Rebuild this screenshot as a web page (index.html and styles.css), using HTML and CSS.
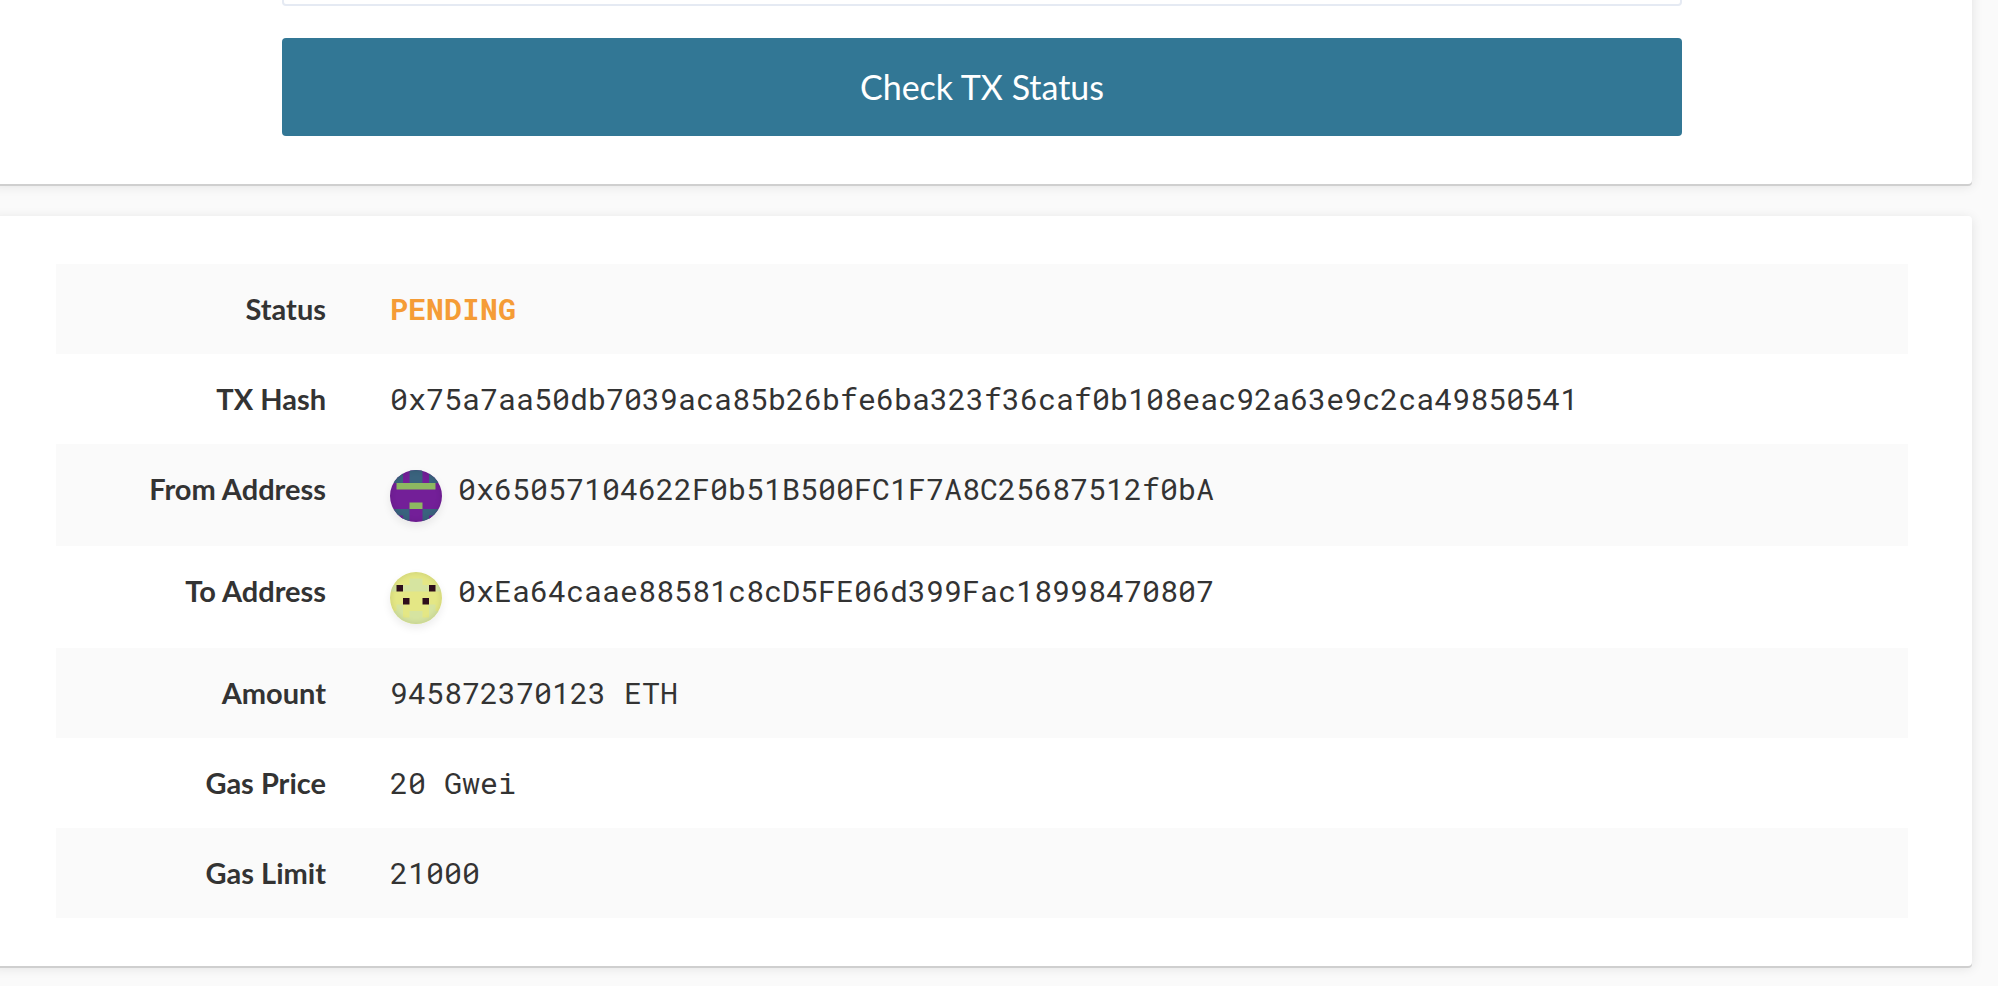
FILE: index.html
```html
<!DOCTYPE html>
<html lang="en">
<head>
<meta charset="utf-8">
<title>Check TX Status</title>
<link rel="stylesheet" href="styles.css">
</head>
<body>
<main class="page">
  <section class="card card-form">
    <form class="form">
      <input class="hash-input" type="text" aria-label="TX Hash">
      <button class="submit" type="button">Check TX Status</button>
    </form>
  </section>
  <section class="card">
    <table class="details">
      <tbody>
        <tr><th scope="row">Status</th><td class="pending">PENDING</td></tr>
        <tr><th scope="row">TX Hash</th><td>0x75a7aa50db7039aca85b26bfe6ba323f36caf0b108eac92a63e9c2ca49850541</td></tr>
        <tr><th scope="row">From Address</th><td><div class="address">
          <span class="avatar"><svg viewBox="0 0 8 8" aria-hidden="true"><path fill="#731f98" d="M0 0h8v8H0z"/><path fill="#3a637e" d="M0 0h2v2H0zM3 0h2v2H3zM6 0h2v2H6zM0 6h3v2H0zM5 6h3v2H5z"/><path fill="#731f98" d="M1 7h1v1H1zM6 7h1v1H6z"/><path fill="#8db961" d="M1 2h6v1H1zM3 5h2v1H3z"/></svg></span>
          <span>0x65057104622F0b51B500FC1F7A8C25687512f0bA</span></div></td></tr>
        <tr><th scope="row">To Address</th><td><div class="address">
          <span class="avatar"><svg viewBox="0 0 8 8" aria-hidden="true"><path fill="#e4e785" d="M0 0h8v8H0z"/><path fill="#d6e4a0" d="M3 1h2v1H3zM0 2h1v1H0zM2 2h4v1H2zM7 2h1v1H7zM1 5h1v1H1zM6 5h1v1H6zM0 6h2v2H0zM3 6h2v1H3zM6 6h2v2H6zM2 7h4v1H2z"/><path fill="#2e0e1c" d="M1 2h1v1H1zM6 2h1v1H6zM2 4h1v1H2zM5 4h1v1H5z"/></svg></span>
          <span>0xEa64caae88581c8cD5FE06d399Fac18998470807</span></div></td></tr>
        <tr><th scope="row">Amount</th><td>945872370123 ETH</td></tr>
        <tr><th scope="row">Gas Price</th><td>20 Gwei</td></tr>
        <tr><th scope="row">Gas Limit</th><td>21000</td></tr>
      </tbody>
    </table>
  </section>
</main>
</body>
</html>
```
FILE: styles.css
```css
* { box-sizing: border-box; }

body {
  margin: 0;
  background: #fafafa;
  color: #333;
  font-family: Lato, "Liberation Sans", sans-serif;
  font-size: 30px;
  line-height: 42px;
  overflow: hidden;
}

.page {
  display: flex;
  flex-direction: column;
  gap: 32px;
  margin: -64px 26px 20px -8px;
}

.card {
  padding: 48px 64px;
  background: #fff;
  border-radius: 4px;
  box-shadow: 0 2px 0 #cfcfcf, 0 2px 12px rgba(0, 0, 0, 0.1);
}

.card-form { padding-top: 0; }

.form {
  display: flex;
  flex-direction: column;
  gap: 32px;
  max-width: 1400px;
  margin: 0 auto;
}

.hash-input {
  height: 70px;
  border: 2px solid #e5eaf3;
  border-radius: 4px;
  background: #fff;
  font: inherit;
}

.submit {
  padding: 28px;
  border: 0;
  border-radius: 4px;
  background: #327795;
  color: #fff;
  font: inherit;
  font-size: 34px;
}

.details {
  width: 100%;
  border-collapse: collapse;
}

.details tr:nth-child(odd) { background: #fafafa; }

.details th,
.details td {
  padding: 24px 32px;
  vertical-align: top;
}

.details th {
  width: 302px;
  text-align: right;
  font-size: 29px;
  font-weight: 700;
}

.details td {
  font-family: "Roboto Mono", "DejaVu Sans Mono", monospace;
}

.details .pending {
  color: #f59c36;
  font-weight: 700;
}

.address {
  display: flex;
  align-items: flex-start;
  gap: 16px;
}

.avatar {
  position: relative;
  width: 52px;
  height: 52px;
  margin-top: 2px;
  overflow: hidden;
  border-radius: 50%;
  box-shadow: 0 4px 8px rgba(0, 0, 0, 0.08);
}

.avatar::after {
  content: "";
  position: absolute;
  inset: 0;
  border-radius: 50%;
  box-shadow: inset 0 0 6px rgba(0, 0, 0, 0.12);
}

.avatar svg { display: block; }
```
